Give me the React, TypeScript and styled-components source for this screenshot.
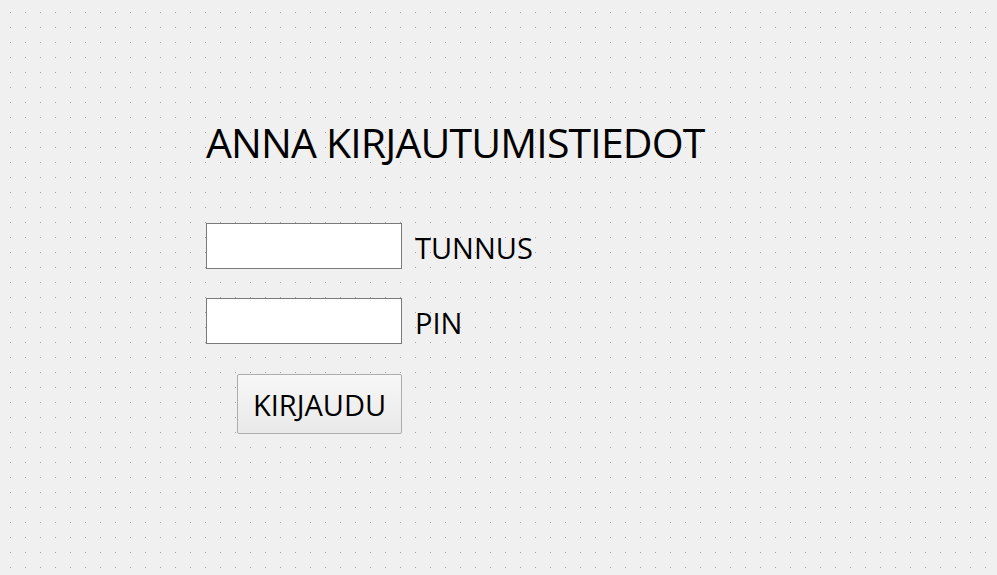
import styled, { createGlobalStyle } from 'styled-components';

const GlobalStyle = createGlobalStyle`
  html, body {
    margin: 0;
    padding: 0;
  }

  body {
    font-family: "Open Sans", "Noto Sans", sans-serif;
    color: #000;
  }
`;

const App = () => {
  return (
    <>
      <GlobalStyle />
      <Form>
        <Title>ANNA KIRJAUTUMISTIEDOT</Title>
        <Fields>
          <FieldRow>
            <TextInput type="text" />
            <FieldLabel>TUNNUS</FieldLabel>
          </FieldRow>
          <FieldRow>
            <TextInput type="password" />
            <FieldLabel>PIN</FieldLabel>
          </FieldRow>
        </Fields>
        <LoginButton type="button">KIRJAUDU</LoginButton>
      </Form>
    </>
  );
};

export default App;

const Form = styled.div`
  box-sizing: border-box;
  width: 997px;
  height: 575px;
  padding: 114px 0 0 206px;
  display: flex;
  flex-direction: column;
  align-items: flex-start;

  background-color: #f0f0f0;
  background-image: linear-gradient(to bottom, transparent 1px, #f0f0f0 1px),
    linear-gradient(to right, #a0a0a0 1px, #f0f0f0 1px);
  background-size: 15px 15px;
  background-position: 10px 12px;
`;

const Title = styled.div`
  font-size: 41px;
  line-height: 56px;
  font-weight: 400;
  letter-spacing: -0.85px;
  white-space: nowrap;
`;

const Fields = styled.div`
  margin-top: 53px;
  display: flex;
  flex-direction: column;
  gap: 29px;
`;

const FieldRow = styled.div`
  display: flex;
  align-items: center;
  gap: 13px;
`;

const TextInput = styled.input`
  box-sizing: border-box;
  width: 196px;
  height: 46px;
  margin: 0;
  padding: 0 4px;
  border: 1px solid #7a7a7a;
  border-radius: 0;
  background: #fff;
  font-family: inherit;
  font-size: 20px;
  outline: none;
`;

const FieldLabel = styled.span`
  font-size: 29px;
  line-height: 40px;
  padding-top: 4px;
`;

const LoginButton = styled.button`
  box-sizing: border-box;
  margin: 30px 0 0 31px;
  width: 165px;
  height: 60px;
  padding: 0;
  border: 1px solid #adadad;
  border-radius: 2px;
  background: linear-gradient(to bottom, #f7f7f7, #e9e9e9);
  font-family: inherit;
  font-size: 29px;
  color: #000;
  cursor: pointer;
`;
